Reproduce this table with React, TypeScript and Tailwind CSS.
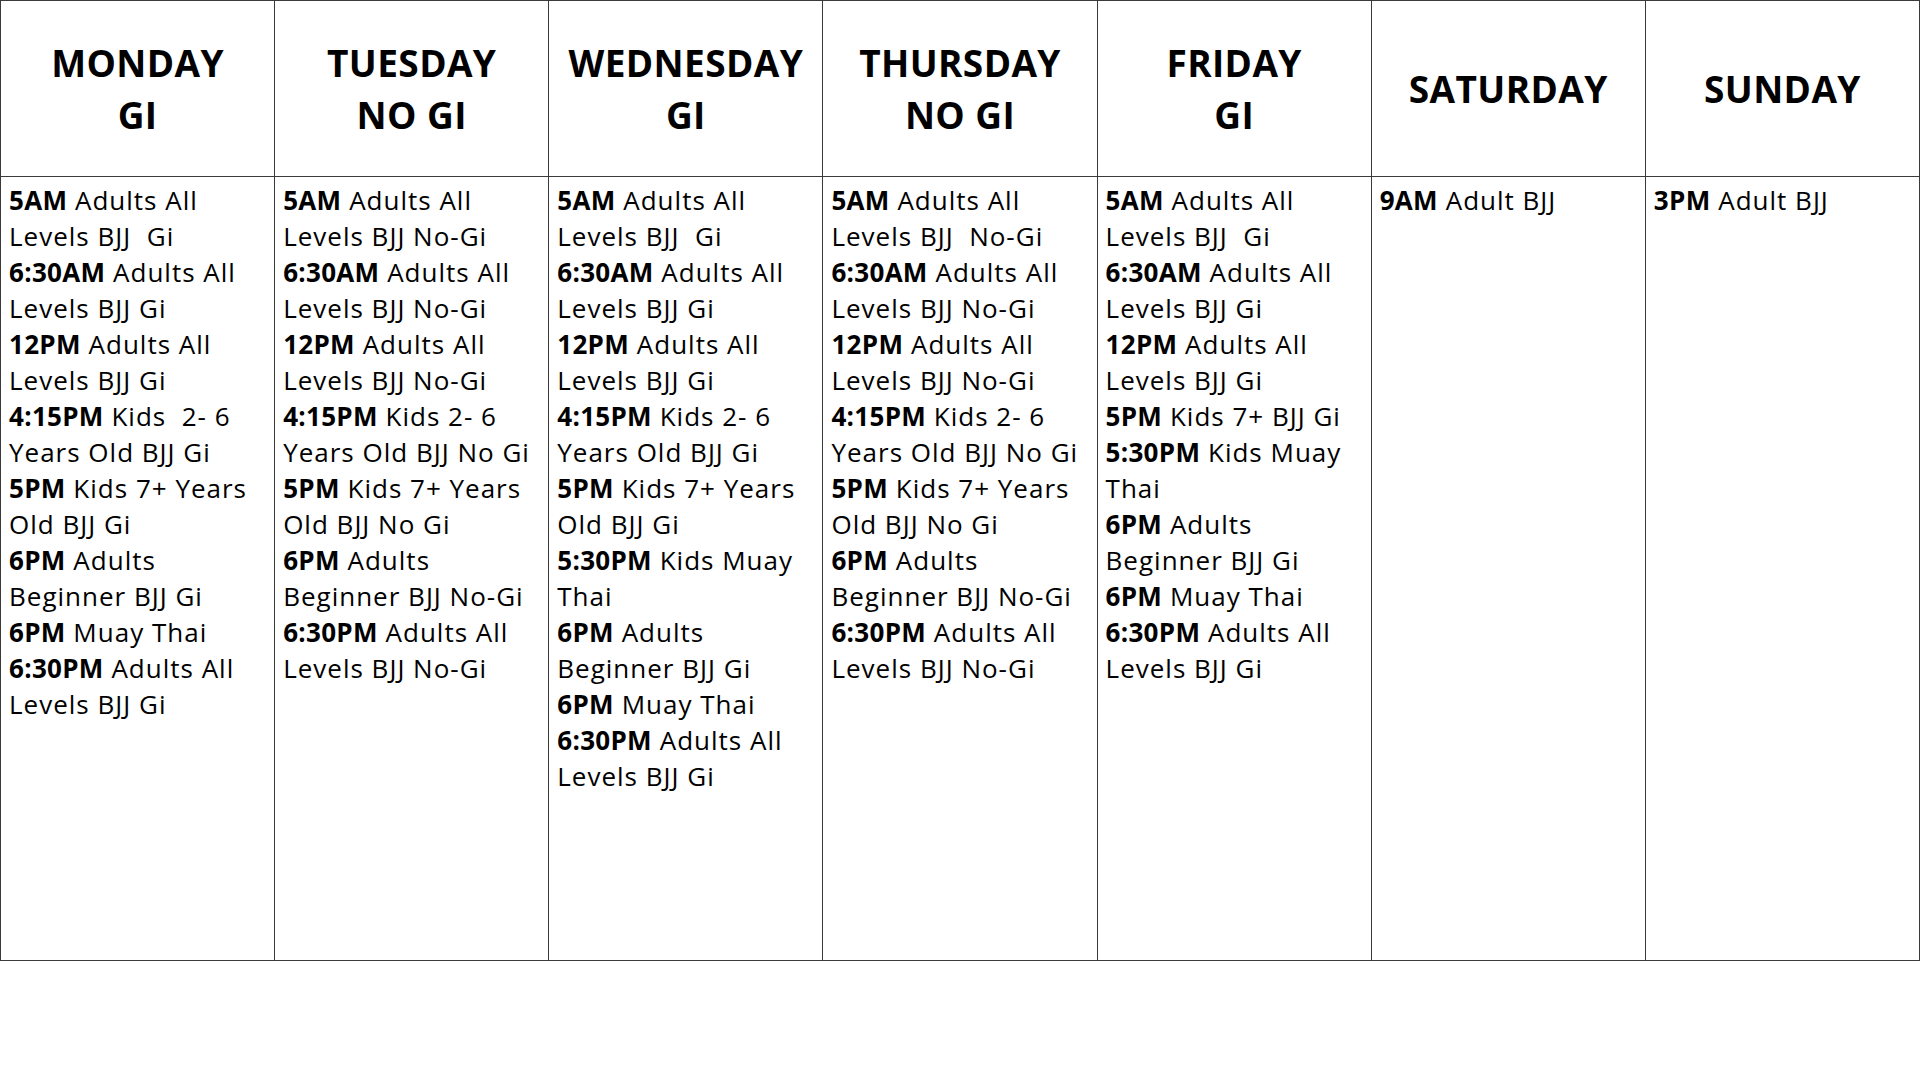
import React from "react";

type Line = { b?: string; t: string };

const L = (b: string | undefined, t: string): Line => ({ b, t });

const days: { title: string[]; lines: Line[] }[] = [
  {
    title: ["MONDAY", "GI"],
    lines: [
      L("5AM", " Adults All"),
      L(undefined, "Levels BJJ  Gi"),
      L("6:30AM", " Adults All"),
      L(undefined, "Levels BJJ Gi"),
      L("12PM", " Adults All"),
      L(undefined, "Levels BJJ Gi"),
      L("4:15PM", " Kids  2- 6"),
      L(undefined, "Years Old BJJ Gi"),
      L("5PM", " Kids 7+ Years"),
      L(undefined, "Old BJJ Gi"),
      L("6PM", " Adults"),
      L(undefined, "Beginner BJJ Gi"),
      L("6PM", " Muay Thai"),
      L("6:30PM", " Adults All"),
      L(undefined, "Levels BJJ Gi"),
    ],
  },
  {
    title: ["TUESDAY", "NO GI"],
    lines: [
      L("5AM", " Adults All"),
      L(undefined, "Levels BJJ No-Gi"),
      L("6:30AM", " Adults All"),
      L(undefined, "Levels BJJ No-Gi"),
      L("12PM", " Adults All"),
      L(undefined, "Levels BJJ No-Gi"),
      L("4:15PM", " Kids 2- 6"),
      L(undefined, "Years Old BJJ No Gi"),
      L("5PM", " Kids 7+ Years"),
      L(undefined, "Old BJJ No Gi"),
      L("6PM", " Adults"),
      L(undefined, "Beginner BJJ No-Gi"),
      L("6:30PM", " Adults All"),
      L(undefined, "Levels BJJ No-Gi"),
    ],
  },
  {
    title: ["WEDNESDAY", "GI"],
    lines: [
      L("5AM", " Adults All"),
      L(undefined, "Levels BJJ  Gi"),
      L("6:30AM", " Adults All"),
      L(undefined, "Levels BJJ Gi"),
      L("12PM", " Adults All"),
      L(undefined, "Levels BJJ Gi"),
      L("4:15PM", " Kids 2- 6"),
      L(undefined, "Years Old BJJ Gi"),
      L("5PM", " Kids 7+ Years"),
      L(undefined, "Old BJJ Gi"),
      L("5:30PM", " Kids Muay"),
      L(undefined, "Thai"),
      L("6PM", " Adults"),
      L(undefined, "Beginner BJJ Gi"),
      L("6PM", " Muay Thai"),
      L("6:30PM", " Adults All"),
      L(undefined, "Levels BJJ Gi"),
    ],
  },
  {
    title: ["THURSDAY", "NO GI"],
    lines: [
      L("5AM", " Adults All"),
      L(undefined, "Levels BJJ  No-Gi"),
      L("6:30AM", " Adults All"),
      L(undefined, "Levels BJJ No-Gi"),
      L("12PM", " Adults All"),
      L(undefined, "Levels BJJ No-Gi"),
      L("4:15PM", " Kids 2- 6"),
      L(undefined, "Years Old BJJ No Gi"),
      L("5PM", " Kids 7+ Years"),
      L(undefined, "Old BJJ No Gi"),
      L("6PM", " Adults"),
      L(undefined, "Beginner BJJ No-Gi"),
      L("6:30PM", " Adults All"),
      L(undefined, "Levels BJJ No-Gi"),
    ],
  },
  {
    title: ["FRIDAY", "GI"],
    lines: [
      L("5AM", " Adults All"),
      L(undefined, "Levels BJJ  Gi"),
      L("6:30AM", " Adults All"),
      L(undefined, "Levels BJJ Gi"),
      L("12PM", " Adults All"),
      L(undefined, "Levels BJJ Gi"),
      L("5PM", " Kids 7+ BJJ Gi"),
      L("5:30PM", " Kids Muay"),
      L(undefined, "Thai"),
      L("6PM", " Adults"),
      L(undefined, "Beginner BJJ Gi"),
      L("6PM", " Muay Thai"),
      L("6:30PM", " Adults All"),
      L(undefined, "Levels BJJ Gi"),
    ],
  },
  {
    title: ["SATURDAY"],
    lines: [L("9AM", " Adult BJJ")],
  },
  {
    title: ["SUNDAY"],
    lines: [L("3PM", " Adult BJJ")],
  },
];

export default function App() {
  return (
    <div
      className="w-[1920px] h-[1080px] bg-white text-black"
      style={{ fontFamily: '"Open Sans", "Noto Sans", sans-serif' }}
    >
      <div className="grid grid-cols-7 grid-rows-[176px_784px] border-t border-l border-[#3a3a3a]">
        {days.map((d, i) => (
          <div
            key={"h" + i}
            className="flex flex-col items-center justify-center border-r border-b border-[#3a3a3a] text-[37px] leading-[52px] font-bold tracking-[0.4px]"
          >
            {d.title.map((t, j) => (
              <div key={j} className="whitespace-pre">
                {t}
              </div>
            ))}
          </div>
        ))}
        {days.map((d, i) => (
          <div
            key={"b" + i}
            className="border-r border-b border-[#3a3a3a] pl-[8px] pt-[5px] text-[26px] leading-[36px] tracking-[1px]"
          >
            {d.lines.map((l, j) => (
              <div key={j} className="whitespace-pre">
                {l.b && <span className="font-bold tracking-[0.3px]">{l.b}</span>}
                {l.t}
              </div>
            ))}
          </div>
        ))}
      </div>
    </div>
  );
}
